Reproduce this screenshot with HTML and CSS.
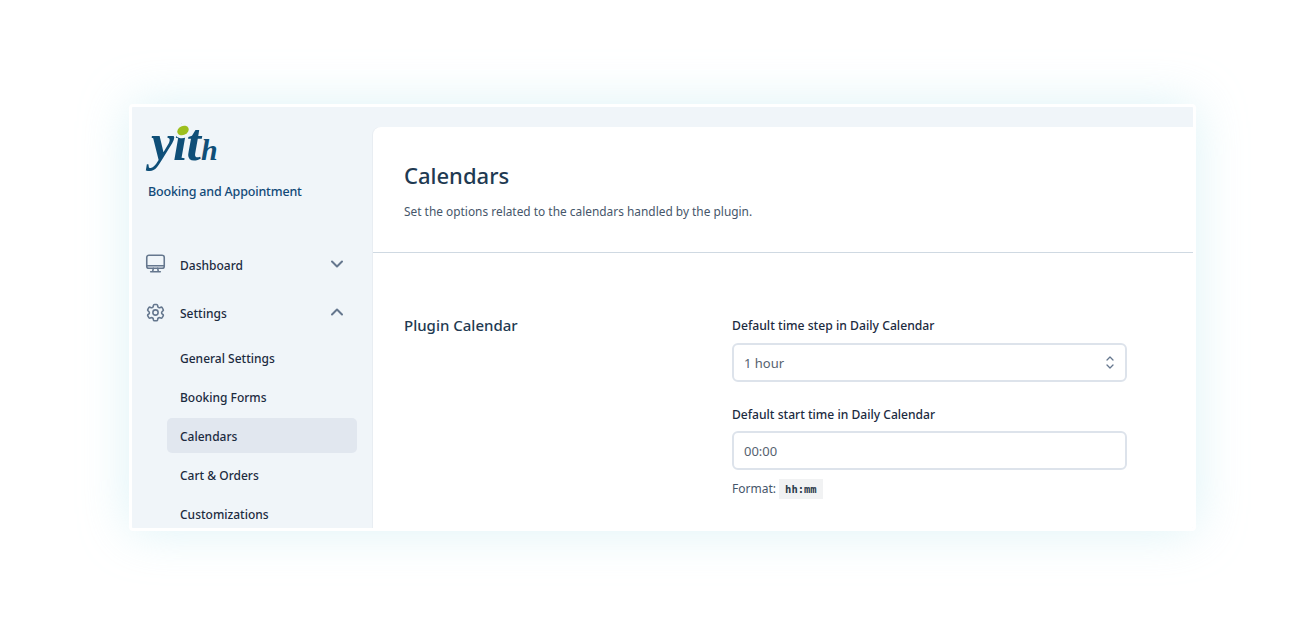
FILE: index.html
```html
<!DOCTYPE html>
<html lang="en">
<head>
    <meta charset="UTF-8">
    <meta name="viewport" content="width=device-width, initial-scale=1.0">
    <title>Booking and Appointment - Calendars</title>
    <link rel="stylesheet" href="styles.css">
</head>
<body>
    <div class="frame">
        <aside class="sidebar">
            <div class="logo"><span class="logo-dot"></span>yit<span class="logo-h">h</span></div>
            <p class="plugin-name">Booking and Appointment</p>

            <nav class="menu">
                <a class="menu-item">
                    <svg class="menu-icon" viewBox="0 0 24 24" fill="none" stroke="currentColor" stroke-width="1.8" stroke-linecap="round" stroke-linejoin="round">
                        <rect x="2" y="2.500" width="20" height="15" rx="2.500"/>
                        <path d="M2 14.500h20M9.500 17.500l-.7 3.500M14.500 17.500l.7 3.500M6.500 21.500h11"/>
                    </svg>
                    <span class="menu-label">Dashboard</span>
                    <svg class="chevron" viewBox="0 0 16 16" fill="none" stroke="currentColor" stroke-width="2" stroke-linecap="round" stroke-linejoin="round"><path d="M3 5.500L8 10.500l5-5"/></svg>
                </a>
                <a class="menu-item">
                    <svg class="menu-icon" viewBox="0 0 24 24" fill="none" stroke="currentColor" stroke-width="1.800" stroke-linecap="round" stroke-linejoin="round">
                        <path d="M9.600 3.900c.1-.6.6-1 1.200-1h2.400c.6 0 1.100.4 1.200 1l.2 1.300c.1.400.4.700.7.900l.5.300c.4.200.8.200 1.100.1l1.200-.5c.6-.2 1.200 0 1.500.5l1.200 2.100c.3.500.2 1.200-.3 1.500l-1 .8c-.3.200-.5.600-.5 1v.6c0 .4.200.8.500 1l1 .8c.5.300.6 1 .3 1.500l-1.200 2.100c-.3.500-.9.700-1.500.5l-1.200-.5c-.3-.1-.7-.1-1.100.1l-.5.300c-.3.200-.6.500-.7.900l-.2 1.300c-.1.600-.6 1-1.200 1h-2.400c-.6 0-1.100-.4-1.200-1l-.2-1.300c-.1-.4-.4-.7-.7-.9l-.5-.3c-.4-.2-.8-.2-1.100-.1l-1.200.5c-.6.200-1.200 0-1.500-.5l-1.200-2.100c-.3-.5-.2-1.200.3-1.500l1-.8c.3-.2.5-.6.5-1v-.6c0-.4-.2-.8-.5-1l-1-.8c-.5-.3-.6-1-.3-1.500l1.200-2.100c.3-.5.9-.7 1.500-.5l1.200.5c.3.100.7.100 1.100-.1l.5-.3c.3-.2.6-.5.7-.9z"/>
                        <circle cx="12" cy="12" r="3"/>
                    </svg>
                    <span class="menu-label">Settings</span>
                    <svg class="chevron" viewBox="0 0 16 16" fill="none" stroke="currentColor" stroke-width="2" stroke-linecap="round" stroke-linejoin="round"><path d="M3 10.500L8 5.500l5 5"/></svg>
                </a>
                <div class="submenu">
                    <a class="submenu-item">General Settings</a>
                    <a class="submenu-item">Booking Forms</a>
                    <a class="submenu-item active">Calendars</a>
                    <a class="submenu-item">Cart &amp; Orders</a>
                    <a class="submenu-item">Customizations</a>
                </div>
            </nav>
        </aside>

        <main class="panel">
            <header class="panel-head">
                <h1>Calendars</h1>
                <p>Set the options related to the calendars handled by the plugin.</p>
            </header>
            <section class="options">
                <h2>Plugin Calendar</h2>
                <div class="fields">
                    <div class="field">
                        <label for="timeStep">Default time step in Daily Calendar</label>
                        <div class="select-box" id="timeStep">
                            <span>1 hour</span>
                            <svg class="updown" viewBox="0 0 8 13" fill="none" stroke="currentColor" stroke-width="1.300" stroke-linecap="round" stroke-linejoin="round"><path d="M1 4L4 1l3 3M1 9l3 3 3-3"/></svg>
                        </div>
                    </div>
                    <div class="field">
                        <label for="startTime" class="label-second">Default start time in Daily Calendar</label>
                        <input type="text" id="startTime" value="00:00">
                        <p class="hint">Format: <code>hh:mm</code></p>
                    </div>
                </div>
            </section>
        </main>
    </div>
</body>
</html>
```
FILE: styles.css
```css
/* Page and outer window */
body {
    margin: 0;
    height: 641px;
    overflow: hidden;
    background-color: #fff;
    font-family: "Noto Sans", sans-serif;
    color: #1f2d3d;
}

.frame {
    display: flex;
    width: 1061px;
    height: 421px;
    margin: 104px 0 0 129px;
    border: 3px solid #fff;
    border-radius: 4px;
    overflow: hidden;
    background-color: #f0f5f9;
    box-shadow: 0 0 50px rgba(170, 225, 235, 0.4);
}

/* Sidebar */
.sidebar {
    flex: none;
    width: 241px;
    box-sizing: border-box;
}

.logo {
    position: relative;
    margin: 10px 0 0 19px;
    height: 56px;
    font-family: "Liberation Serif", serif;
    font-size: 52px;
    line-height: 52px;
    font-weight: 700;
    font-style: italic;
    letter-spacing: -1px;
    color: #0f4f78;
}

.logo-h {
    margin-left: 1px;
    font-size: 30px;
}

.logo-dot {
    position: absolute;
    left: 26px;
    top: 9px;
    width: 12px;
    height: 9px;
    border-radius: 50%;
    background-color: #9dbf1e;
    box-shadow: 0 0 0 3px #f0f5f9;
    transform: rotate(-25deg);
}

.plugin-name {
    margin: 10px 0 0 16px;
    font-size: 12.500px;
    line-height: 18px;
    font-weight: 500;
    letter-spacing: -0.17px;
    color: #124a78;
}

.menu {
    margin-top: 40px;
}

.menu-item {
    display: flex;
    align-items: center;
    height: 48.500px;
    padding: 0 28px 0 13px;
    font-size: 12px;
    font-weight: 500;
    color: #1c2b3f;
}

.menu-icon {
    width: 21px;
    height: 21px;
    margin-top: -3px;
    color: #65778e;
}

.menu-label {
    flex: 1;
    margin-left: 14px;
}

.chevron {
    width: 16px;
    height: 16px;
    margin-top: -3px;
    color: #65778e;
}

.submenu {
    margin: -1px 16px 0 35px;
}

.submenu-item {
    display: block;
    height: 35px;
    margin-top: 4px;
    padding-left: 13px;
    border-radius: 5px;
    font-size: 12px;
    line-height: 35px;
    font-weight: 500;
    color: #1c2b3f;
}

.submenu-item.active {
    margin-top: 3px;
    margin-bottom: 5px;
    line-height: 37px;
    background-color: #e1e7ef;
}

/* Main panel */
.panel {
    flex: 1;
    margin-top: 20px;
    border-top-left-radius: 8px;
    background-color: #fff;
    box-shadow: -1px 0 0 #e8edf2;
}

.panel-head {
    height: 126px;
    box-sizing: border-box;
    padding: 33px 31px 0;
    border-bottom: 1px solid #cfd9e2;
}

.panel-head h1 {
    margin: 0;
    font-size: 22px;
    line-height: 30px;
    font-weight: 500;
    color: #1f3a52;
}

.panel-head p {
    margin: 12px 0 0;
    font-size: 11.900px;
    line-height: 18px;
    color: #46566a;
}

.options {
    display: flex;
    padding: 60px 31px 0;
}

.options h2 {
    flex: none;
    width: 328px;
    margin: 0;
    font-size: 15px;
    line-height: 24px;
    font-weight: 500;
    color: #1f3a52;
}

.fields {
    width: 395px;
}

.field {
    margin-bottom: 24px;
}

.field label {
    display: block;
    margin: 4px 0 8px;
    font-size: 12.200px;
    line-height: 18px;
    font-weight: 500;
    color: #1c2b3f;
}

.field .label-second {
    margin: 0 0 7px;
    font-size: 12.100px;
}

.select-box,
.field input {
    display: flex;
    align-items: center;
    justify-content: space-between;
    width: 100%;
    height: 39px;
    box-sizing: border-box;
    padding: 0 10px;
    border: 2px solid #dde3eb;
    border-radius: 6px;
    background-color: #fff;
    font-family: "Noto Sans", sans-serif;
    font-size: 13px;
    color: #56626f;
}

.updown {
    width: 8px;
    height: 13px;
    margin-right: 1px;
    color: #65778e;
}

.hint {
    margin: 9px 0 0;
    font-size: 12px;
    line-height: 20px;
    color: #46566a;
}

.hint code {
    display: inline-block;
    padding: 0 6px;
    background-color: #f1f2f3;
    font-family: "DejaVu Sans Mono", monospace;
    font-size: 10.500px;
    font-weight: 700;
    color: #2c3a4a;
}
```
